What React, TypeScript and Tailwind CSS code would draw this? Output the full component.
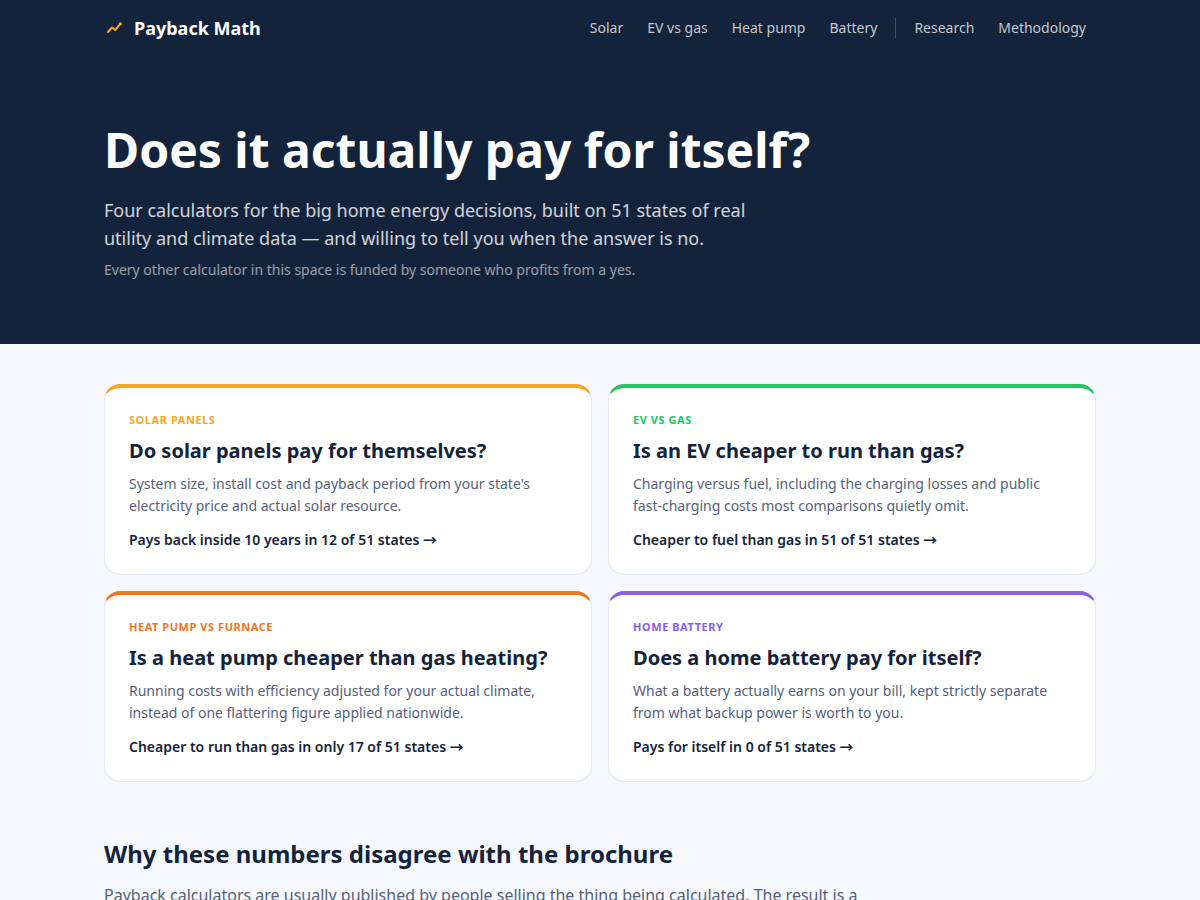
type Calculator = {
  label: string;
  title: string;
  text: string;
  result: string;
  href: string;
  border: string;
  color: string;
};

const calculators: Calculator[] = [
  {
    label: "Solar panels",
    title: "Do solar panels pay for themselves?",
    text: "System size, install cost and payback period from your state's electricity price and actual solar resource.",
    result: "Pays back inside 10 years in 12 of 51 states",
    href: "#solar",
    border: "border-t-[#f5a623]",
    color: "text-[#f5a623]",
  },
  {
    label: "EV vs gas",
    title: "Is an EV cheaper to run than gas?",
    text: "Charging versus fuel, including the charging losses and public fast-charging costs most comparisons quietly omit.",
    result: "Cheaper to fuel than gas in 51 of 51 states",
    href: "#ev",
    border: "border-t-[#22c55e]",
    color: "text-[#22c55e]",
  },
  {
    label: "Heat pump vs furnace",
    title: "Is a heat pump cheaper than gas heating?",
    text: "Running costs with efficiency adjusted for your actual climate, instead of one flattering figure applied nationwide.",
    result: "Cheaper to run than gas in only 17 of 51 states",
    href: "#heat-pump",
    border: "border-t-[#f0761e]",
    color: "text-[#f0761e]",
  },
  {
    label: "Home battery",
    title: "Does a home battery pay for itself?",
    text: "What a battery actually earns on your bill, kept strictly separate from what backup power is worth to you.",
    result: "Pays for itself in 0 of 51 states",
    href: "#battery",
    border: "border-t-[#8b5fe3]",
    color: "text-[#8b5fe3]",
  },
];

const navLink = "px-2.5 py-2 text-sm text-white/75 hover:text-white";

const Header = () => {
  return (
    <header className="bg-[#14233c]">
      <div className="mx-auto flex h-14 max-w-5xl items-center justify-between px-4">
        <a href="#home" className="flex items-center gap-2 text-lg font-bold text-white">
          <svg width="22" height="22" viewBox="0 0 22 22" fill="none" aria-hidden="true">
            <path
              d="M4 15L8 10.5L11.2 13L16.3 6.8"
              stroke="#f5a623"
              strokeWidth="2"
              strokeLinecap="round"
              strokeLinejoin="round"
            />
            <circle cx="16.3" cy="6.8" r="1.6" fill="#f5a623" />
          </svg>
          Payback Math
        </a>
        <nav className="flex items-center gap-1">
          <a href="#solar" className={navLink}>Solar</a>
          <a href="#ev" className={navLink}>EV vs gas</a>
          <a href="#heat-pump" className={navLink}>Heat pump</a>
          <a href="#battery" className={navLink}>Battery</a>
          <span className="mx-1 h-5 w-px bg-white/20" />
          <a href="#research" className={navLink}>Research</a>
          <a href="#methodology" className={navLink}>Methodology</a>
        </nav>
      </div>
    </header>
  );
};

const Hero = () => {
  return (
    <section className="bg-[#14233c]">
      <div className="mx-auto max-w-5xl px-4 py-16">
        <h1 className="text-5xl leading-15 font-bold text-white">
          Does it actually pay for itself?
        </h1>
        <p className="mt-4 max-w-2xl text-lg leading-7 text-white/80">
          Four calculators for the big home energy decisions, built on 51 states of real utility
          and climate data — and willing to tell you when the answer is no.
        </p>
        <p className="mt-2 text-sm text-white/55">
          Every other calculator in this space is funded by someone who profits from a yes.
        </p>
      </div>
    </section>
  );
};

const Card = ({ item }: { item: Calculator }) => {
  return (
    <a
      href={item.href}
      className={`block rounded-2xl border border-t-4 border-[#e2e8f0] bg-white p-6 ${item.border}`}
    >
      <p className={`text-[11px] leading-4 font-bold tracking-wider uppercase ${item.color}`}>
        {item.label}
      </p>
      <h2 className="mt-[9px] text-xl leading-7 font-bold text-[#14233c]">{item.title}</h2>
      <p className="mt-2 text-sm leading-[22px] text-[#566179]">{item.text}</p>
      <p className="mt-3 text-sm leading-[21px] font-semibold text-[#14233c]">
        {item.result} <span className="font-['Noto_Sans_CJK_SC',sans-serif]">→</span>
      </p>
    </a>
  );
};

const App = () => {
  return (
    <div className="min-h-screen bg-[#f6f8fc] font-['Noto_Sans',sans-serif]">
      <Header />
      <Hero />
      <main className="mx-auto max-w-5xl px-4 py-10">
        <div className="grid gap-4 md:grid-cols-2">
          {calculators.map((item) => (
            <Card key={item.label} item={item} />
          ))}
        </div>
        <section className="mt-14 max-w-3xl">
          <h2 className="text-2xl font-bold text-[#14233c]">
            Why these numbers disagree with the brochure
          </h2>
          <p className="mt-3 leading-[26px] text-[#566179]">
            Payback calculators are usually published by people selling the thing being
            calculated. The result is a
          </p>
        </section>
      </main>
    </div>
  );
};

export default App;
